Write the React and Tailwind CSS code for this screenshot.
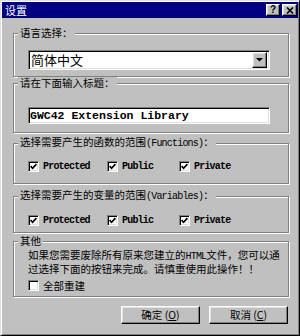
import React from 'react';

const cjk = "font-['Noto_Sans_CJK_SC',sans-serif]";

// Latin bits in the dialog are a narrow mono face
const M = ({ children, className = '' }) => (
  <span className={`font-['Liberation_Mono',monospace] text-[10px] tracking-[-0.8px] ${className}`}>{children}</span>
);

const raised =
  'border border-t-white border-l-white border-r-black border-b-black shadow-[inset_-1px_-1px_0_#808080,inset_1px_1px_0_#dfdfdf] bg-[#c0c0c0]';
const sunken =
  'border border-t-[#808080] border-l-[#808080] border-b-white border-r-white shadow-[inset_1px_1px_0_#000,inset_-1px_-1px_0_#dfdfdf] bg-white';

const Check = ({ checked }) => (
  <span className={`w-[11px] h-[11px] flex items-center justify-center shrink-0 ${sunken}`}>
    {checked && (
      <svg width="7" height="7" viewBox="0 0 7 7">
        <path d="M0.6 3.2 L2.6 5.3 L6.4 1.2" stroke="#000" strokeWidth="1.7" fill="none" />
      </svg>
    )}
  </span>
);

const Group = ({ title, h, children }) => (
  <fieldset
    className={`ml-[11px] w-[276px] border border-[#808080] shadow-[inset_1px_1px_0_#fff,1px_1px_0_#fff] ${h}`}
  >
    <legend className="ml-[4px] px-[2px] leading-[12px] bg-[#c0c0c0] text-[10.5px] text-black">{title}</legend>
    {children}
  </fieldset>
);

const ScopeRow = ({ mt }) => (
  <div className={`grid grid-cols-[79px_72px_auto] pl-[14px] ${mt}`}>
    {['Protected', 'Public', 'Private'].map((label) => (
      <div key={label} className="flex items-center gap-[4px] h-[11px]">
        <Check checked />
        <M className="leading-[11px] font-semibold">{label}</M>
      </div>
    ))}
  </div>
);

export default function App() {
  return (
    <div
      className={`w-[300px] h-[336px] bg-[#c0c0c0] p-[1px] border border-t-[#dfdfdf] border-l-[#dfdfdf] border-r-black border-b-black shadow-[inset_1px_1px_0_#fff,inset_-1px_-1px_0_#808080] ${cjk}`}
    >
      {/* Title bar */}
      <div className="h-[16px] bg-[#000080] flex items-center justify-between pl-[3px] pr-[1px]">
        <span className="text-white text-[11px] leading-[16px]">设置</span>
        <div className="flex gap-[2px]">
          <button className={`w-[14px] h-[12px] flex items-center justify-center text-[10px] font-bold leading-none text-black font-['Liberation_Sans',sans-serif] ${raised}`}>
            ?
          </button>
          <button className={`w-[15px] h-[12px] flex items-center justify-center ${raised}`}>
            <svg width="8" height="7" viewBox="0 0 8 7">
              <path d="M1 0.5 L7 6.5 M7 0.5 L1 6.5" stroke="#000" strokeWidth="1.6" />
            </svg>
          </button>
        </div>
      </div>

      <div className="mt-[9px]">
        <Group title="语言选择：" h="h-[50px]">
          <div className={`ml-[14px] mt-[11px] w-[242px] h-[20px] flex items-center justify-between pl-[2px] pr-[2px] ${sunken}`}>
            <span className="text-[13px] leading-[16px] text-black">简体中文</span>
            <span className={`w-[15px] h-[16px] flex items-center justify-center ${raised}`}>
              <svg width="7" height="6" viewBox="0 0 7 6">
                <path d="M0 1 H7 L3.5 4.5 Z" fill="#000" />
              </svg>
            </span>
          </div>
        </Group>

        <Group title="请在下面输入标题：" h="h-[56px]">
          <div className={`ml-[14px] mt-[18px] w-[242px] h-[17px] flex items-center pl-[1px] ${sunken}`}>
            <span className="font-['Liberation_Mono',monospace] font-bold text-[11.5px] leading-[13px] text-black">
              GWC42 Extension Library
            </span>
          </div>
        </Group>

        <div className="mt-[3px]">
          <Group
            title={
              <>
                选择需要产生的函数的范围<M>(Functions)</M>：
              </>
            }
            h="h-[48px]"
          >
            <ScopeRow mt="mt-[11px]" />
          </Group>
        </div>

        <div className="mt-[5px]">
          <Group
            title={
              <>
                选择需要产生的变量的范围<M>(Variables)</M>：
              </>
            }
            h="h-[44px]"
          >
            <ScopeRow mt="mt-[12px]" />
          </Group>
        </div>

        <div className="mt-[2px]">
          <Group title="其他" h="h-[62px]">
            <p className="pl-[14px] mt-[2px] text-[10.5px] leading-[12px] text-black whitespace-nowrap">
              如果您需要废除所有原来您建立的<M>HTML</M>文件，您可以通
              <br />
              过选择下面的按钮来完成。请慎重使用此操作！！
            </p>
            <div className="pl-[14px] mt-[5px] flex items-center gap-[4px]">
              <Check />
              <span className="text-[10.5px] leading-[11px] text-black">全部重建</span>
            </div>
          </Group>
        </div>

        {/* Buttons */}
        <div className="ml-[11px] w-[276px] mt-[9px] pr-[1px] flex justify-end gap-[9px]">
          <button className={`w-[79px] h-[18px] flex items-center justify-center text-[10.5px] leading-none text-black ${raised}`}>
            确定 (<span className="underline">O</span>)
          </button>
          <button className={`w-[79px] h-[18px] flex items-center justify-center text-[10.5px] leading-none text-black ${raised}`}>
            取消 (<span className="underline">C</span>)
          </button>
        </div>
      </div>
    </div>
  );
}
